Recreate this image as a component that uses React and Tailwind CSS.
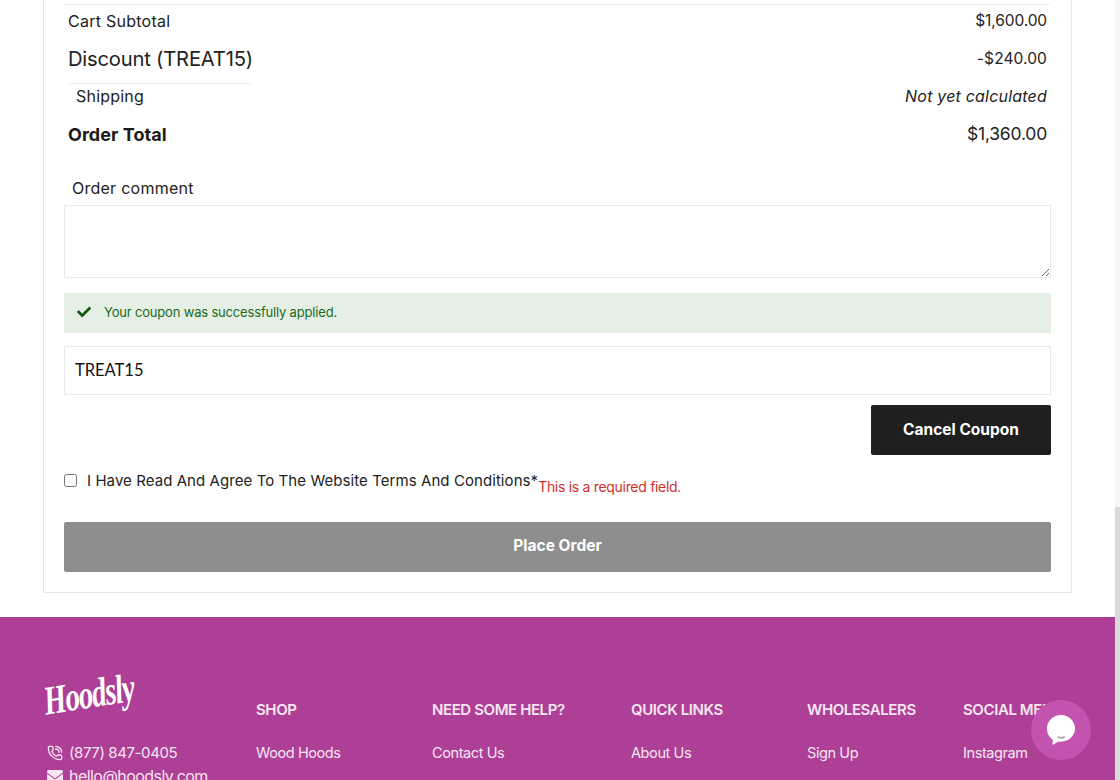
import React from 'react'
import { PhoneCall } from 'lucide-react'
import { FaCheck, FaEnvelope } from 'react-icons/fa'

const poppins = "font-['Inter','Noto_Sans',sans-serif]"

const FooterCol = ({ title, link, width }) => (
  <div className={`${width} shrink-0 pt-[25px]`}>
    <h4 className="text-[15px] leading-[20px] font-semibold text-[#f6e6f2] whitespace-nowrap tracking-[-0.4px]">{title}</h4>
    <a className="block mt-[23px] text-[14.5px] leading-[20px] text-[#f6e6f2] tracking-[-0.4px]" href="#">{link}</a>
  </div>
)

const App = () => {
  return (
    <div className={`relative w-[1120px] h-[780px] overflow-hidden flex bg-white text-[#222] ${poppins}`}>
      <div className="w-[1115px] shrink-0">
        <div className="ml-[43px] w-[1029px] h-[593px] border-x border-b border-[#e8e8e8] px-[20px]">
          <div className="h-[5px] border-b border-[#eeeeee] mr-[1px]"></div>

          <div className="ml-[4px] mr-[4px]">
            <div className="h-[33px] pb-[1px] flex justify-between items-center text-[15.5px]">
              <span className="text-[16px] tracking-[0.25px]">Cart Subtotal</span>
              <span className="tracking-[-0.1px]">$1,600.00</span>
            </div>
            <div className="h-[46px] flex justify-between items-center">
              <span className="w-[184px] h-full pb-[3px] flex items-center border-b border-[#eeeeee] text-[20.2px] tracking-[-0.2px] whitespace-nowrap">Discount (TREAT15)</span>
              <span className="pb-[4px] text-[15.5px] tracking-[0.1px]">-$240.00</span>
            </div>
            <div className="h-[24px] mb-[2px] flex justify-between items-center text-[16px]">
              <span className="ml-[8px] tracking-[0.2px]">Shipping</span>
              <em className="italic tracking-[0.2px]">Not yet calculated</em>
            </div>
            <div className="h-[48px] flex justify-between items-center">
              <strong className="text-[18px] font-bold text-[#1e1a1a] tracking-[0.05px]">Order Total</strong>
              <span className="text-[17.5px] tracking-[-0.2px]">$1,360.00</span>
            </div>
          </div>

          <label className="block mt-[18px] ml-[8px] text-[16px] tracking-[0.25px] leading-[24px]">Order comment</label>
          <textarea className="block mt-[5px] w-[987px] h-[73px] border border-[#ebebeb] outline-none" readOnly></textarea>

          <div className="mt-[15px] w-[987px] h-[40px] bg-[#e5efe5] flex items-center pl-[13px] text-[#1d6b1d]">
            <FaCheck className="text-[#0f5c0f] -mt-[2px]" size={14} />
            <span className="ml-[13px] text-[13px] tracking-[-0.18px]">Your coupon was successfully applied.</span>
          </div>

          <div className="mt-[13px] w-[987px] h-[49px] border border-[#ebebeb] flex items-center pl-[10px] text-[16.5px] text-[#111] font-['Lato',sans-serif]">TREAT15</div>

          <div className="mt-[10px] w-[987px] flex justify-end">
            <button className="w-[180px] h-[50px] rounded-[2px] bg-[#1f1f1f] text-white text-[15.5px] font-bold">Cancel Coupon</button>
          </div>

          <div className="mt-[17px] h-[33px] flex items-start whitespace-nowrap">
            <input type="checkbox" className="mt-[2px] w-[13px] h-[13px] appearance-auto" readOnly />
            <span className="ml-[10px] text-[15px] leading-[18px] tracking-[0.07px]">I Have Read And Agree To The Website Terms And Conditions*</span>
            <span className="mt-[6px] text-[14px] leading-[18px] text-[#d32f2f] tracking-[-0.3px]">This is a required field.</span>
          </div>

          <button className="mt-[17px] block w-[987px] h-[50px] pb-[2px] rounded-[2px] bg-[#8e8e8e] text-white text-[15.5px] font-bold">Place Order</button>
        </div>

        <footer className="mt-[24px] h-[163px] bg-[#ae3f96] flex pl-[44px]">
          <div className="w-[212px] shrink-0">
            <div className="mt-[63px] h-[42px] flex items-center">
              <span className="inline-block origin-left -rotate-[9deg] scale-y-[1.4] text-[29px] leading-none font-black italic text-white font-['Liberation_Serif',serif] tracking-[-1.100px]">Hoodsly</span>
            </div>
            <div className="mt-[20px] ml-[3px] flex items-center text-[#f6e6f2] text-[15px] leading-[22px]">
              <PhoneCall size={16} strokeWidth={2} />
              <span className="ml-[6px] tracking-[-0.4px]">(877) 847-0405</span>
            </div>
            <div className="mt-[1px] ml-[3px] flex items-center text-[#f6e6f2] text-[16px] leading-[22px]">
              <FaEnvelope size={16} />
              <span className="ml-[6px] tracking-[-0.55px]">hello@hoodsly.com</span>
            </div>
          </div>
          <div className="flex mt-[58px]">
            <FooterCol title="SHOP" link="Wood Hoods" width="w-[176px]" />
            <FooterCol title="NEED SOME HELP?" link="Contact Us" width="w-[199px]" />
            <FooterCol title="QUICK LINKS" link="About Us" width="w-[176px]" />
            <FooterCol title="WHOLESALERS" link="Sign Up" width="w-[156px]" />
            <FooterCol title="SOCIAL MEDIA" link="Instagram" width="w-[108px]" />
          </div>
        </footer>
      </div>

      {/* scrollbar */}
      <div className="w-[5px] h-full flex flex-col bg-[#f6f6f6]">
        <div className="h-[507px]"></div>
        <div className="flex-1 bg-[#d9d9d9]"></div>
      </div>

      {/* chat button */}
      <div className="absolute left-[1031px] top-[700px] w-[60px] h-[60px] rounded-full bg-[#c253ae] flex items-center justify-center">
        <svg width="30" height="32" viewBox="0 0 32 34">
          <path d="M16 1C7.700 1 1 7.500 1 15.500c0 5 2.400 9.300 6.200 12L7 33l6.300-3.800c.9.200 1.800.3 2.700.3 8.300 0 15-6.300 15-14S24.300 1 16 1z" fill="#fff" />
          <path d="M13 24.500c2 1 4.500 1 6.500 0" fill="none" stroke="#a8a0a8" strokeWidth="1.600" strokeLinecap="round" />
        </svg>
      </div>
    </div>
  )
}

export default App
